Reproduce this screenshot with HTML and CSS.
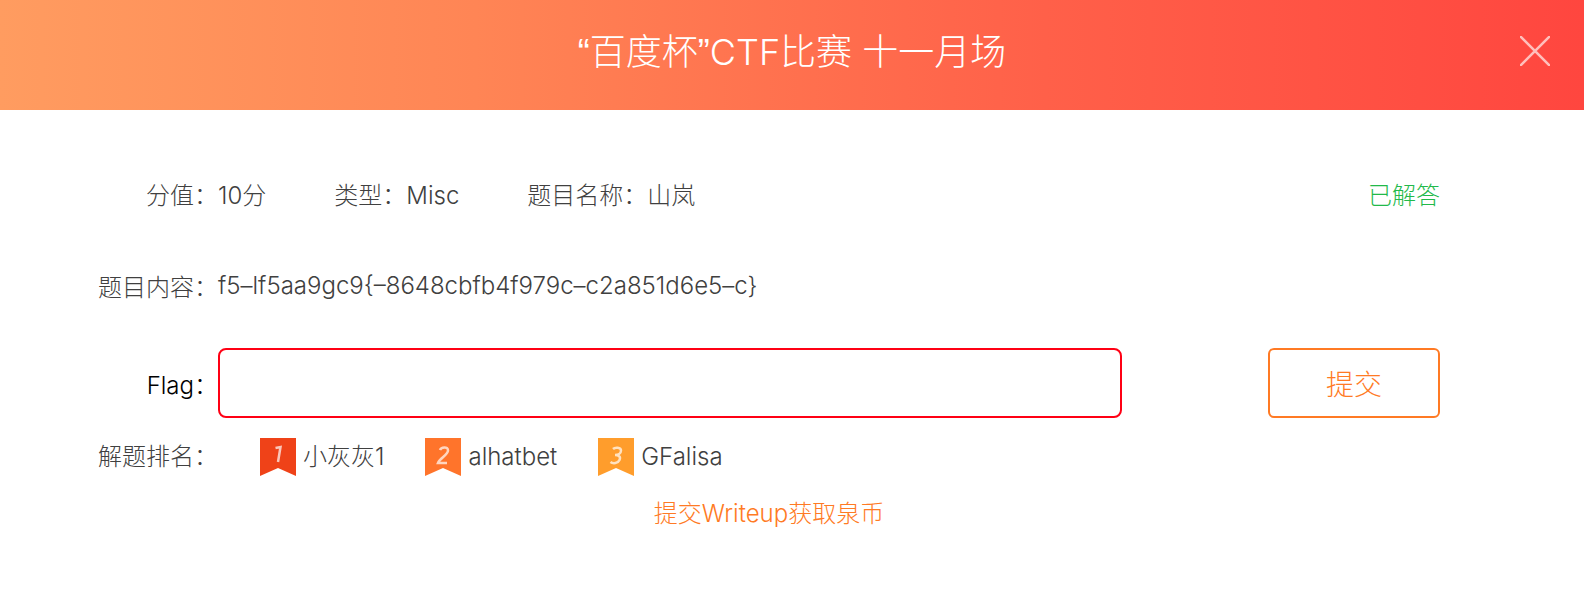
FILE: index.html
```html
<!DOCTYPE html>
<html lang="zh-CN">
<head>
<meta charset="utf-8">
<title>“百度杯”CTF比赛 十一月场</title>
<link rel="stylesheet" href="styles.css">
</head>
<body>
<main class="dialog">
  <header class="dialog-header">
    <h1 class="dialog-title"><span class="quote">“</span>百度杯<span class="quote">”</span>CTF比赛 十一月场</h1>
    <button class="close" type="button" aria-label="关闭">
      <svg class="close-icon" viewBox="0 0 30 30" aria-hidden="true"><path d="M0 0L30 30M30 0L0 30"/></svg>
    </button>
  </header>
  <form class="dialog-body">
    <div class="row row-meta">
      <span class="label">分值：</span>
      <div class="meta">
        <span>10分</span>
        <span>类型：Misc</span>
        <span>题目名称：山岚</span>
      </div>
      <span class="status">已解答</span>
    </div>
    <div class="row row-content">
      <span class="label label-content">题目内容：</span>
      <span class="content">f5–lf5aa9gc9{–8648cbfb4f979c–c2a851d6e5–c}</span>
    </div>
    <div class="row row-flag">
      <label class="label label-flag" for="flag">Flag：</label>
      <input class="flag-input" id="flag" type="text">
      <button class="submit" type="submit">提交</button>
    </div>
    <div class="row row-rank">
      <span class="label">解题排名：</span>
      <ol class="ranking">
        <li class="rank">
          <svg class="badge badge-first" viewBox="0 0 36 38" role="img" aria-label="1"><path class="ribbon" d="M0 0H36V38L18 30L0 38Z"/><path class="digit" d="M15.500 10L20.500 9L18 24"/></svg>
          <span>小灰灰1</span>
        </li>
        <li class="rank">
          <svg class="badge badge-second" viewBox="0 0 36 38" role="img" aria-label="2"><path class="ribbon" d="M0 0H36V38L18 30L0 38Z"/><path class="digit" d="M15 12C16 9 23 8 23 12.500C23 17 15 20 13 25H22"/></svg>
          <span>alhatbet</span>
        </li>
        <li class="rank">
          <svg class="badge badge-third" viewBox="0 0 36 38" role="img" aria-label="3"><path class="ribbon" d="M0 0H36V38L18 30L0 38Z"/><path class="digit" d="M15 11C17 9 23 9 23 12.500C23 15.500 20 17 17 17C21 17 23 19 21.500 22C20 25.500 15 26 12.500 24"/></svg>
          <span>GFalisa</span>
        </li>
      </ol>
    </div>
    <a class="writeup" href="#writeup">提交Writeup获取泉币</a>
  </form>
</main>
</body>
</html>
```
FILE: styles.css
```css
* {
  box-sizing: border-box;
}

body {
  margin: 0;
  background: #fff;
  color: #404040;
  font: 300 24px/36px Inter, "Noto Sans CJK SC", sans-serif;
}

button,
input {
  font: inherit;
}

.dialog-header {
  display: grid;
  grid-template-columns: 64px 1fr 64px;
  align-items: center;
  padding: 18px 0 26px;
  background: linear-gradient(90deg, #ff9c60, #ff8555 30%, #ff6049 66%, #ff463f);
}

.dialog-title {
  grid-column: 2;
  margin: 0;
  padding-top: 2px;
  color: #fff;
  font-size: 36px;
  font-weight: 300;
  line-height: 64px;
  text-align: center;
}

.quote {
  font-family: "Liberation Sans", sans-serif;
  line-height: 1;
}

.close {
  width: 30px;
  height: 30px;
  padding: 0;
  border: 0;
  background: none;
}

.close-icon {
  display: block;
  width: 30px;
  height: 30px;
  fill: none;
  stroke: #ffc0bc;
  stroke-width: 2.5;
}

.dialog-body {
  display: flex;
  flex-direction: column;
  padding: 68px 144px 32px 98px;
}

.row {
  display: flex;
  align-items: center;
}

.label {
  flex: none;
  width: 120px;
  text-align: right;
}

.label-content {
  padding-top: 4px;
}

.label-flag {
  padding-top: 6px;
  color: #000;
}

.meta {
  display: flex;
  flex: 1;
  gap: 68px;
}

.status {
  color: #22b94a;
}

.row-content {
  margin-top: 52px;
}

.row-flag {
  margin-top: 42px;
}

.flag-input {
  flex: 1;
  min-width: 0;
  height: 70px;
  margin-right: 146px;
  padding: 0 16px;
  border: 2px solid #ff0014;
  border-radius: 8px;
  background: #fff;
}

.submit {
  width: 172px;
  height: 70px;
  padding: 4px 0 0;
  border: 2px solid #ff7a24;
  border-radius: 6px;
  background: #fff;
  color: #ff7a24;
  font-size: 28px;
}

.row-rank {
  margin-top: 20px;
}

.ranking {
  display: flex;
  gap: 41px;
  margin: 0;
  padding: 0 0 0 42px;
  list-style: none;
}

.rank {
  display: flex;
  align-items: center;
  gap: 7px;
}

.badge {
  width: 36px;
  height: 38px;
}

.badge-first {
  fill: #ef4218;
}

.badge-second {
  fill: #ff742b;
}

.badge-third {
  fill: #ff9d2c;
}

.digit {
  fill: none;
  stroke: #fff;
  stroke-opacity: 0.7;
  stroke-width: 2.5;
}

.writeup {
  align-self: center;
  margin-top: 20px;
  color: #ff7a24;
  text-decoration: none;
}
```
